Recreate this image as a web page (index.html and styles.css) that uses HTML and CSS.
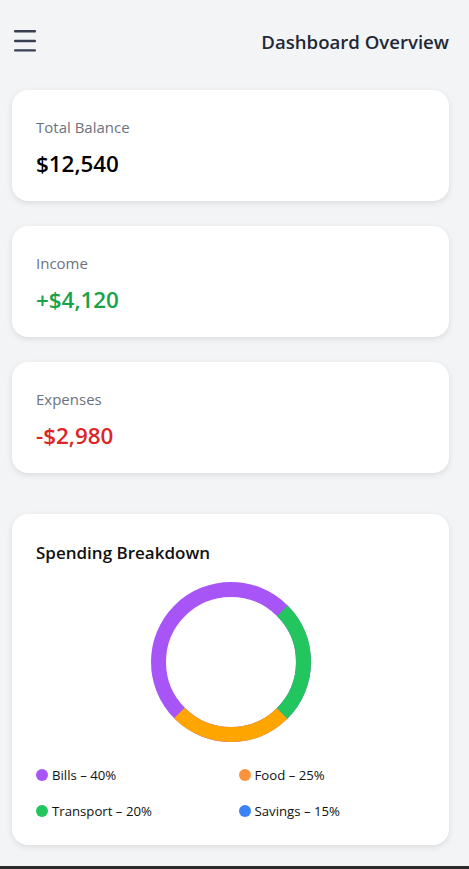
FILE: index.html
```html
<!DOCTYPE html>
<html lang="en">
<head>
    <meta charset="UTF-8">
    <meta name="viewport" content="width=device-width, initial-scale=1.0">
    <title>Dashboard Overview</title>
    <link rel="stylesheet" href="styles.css">
</head>
<body>

<header class="topBar">
    <button class="menuButton" aria-label="Menu">
        <svg width="22" height="22" viewBox="0 0 22 22">
            <rect x="0" y="0" width="22" height="2.4" rx="1" fill="#374151"/>
            <rect x="0" y="9.8" width="22" height="2.4" rx="1" fill="#374151"/>
            <rect x="0" y="19.2" width="22" height="2.4" rx="1" fill="#374151"/>
        </svg>
    </button>
    <h1 class="pageTitle">Dashboard Overview</h1>
</header>

<main class="content">
    <div class="card statCard">
        <div class="statLabel">Total Balance</div>
        <div class="statValue">$12,540</div>
    </div>

    <div class="card statCard">
        <div class="statLabel">Income</div>
        <div class="statValue positive">+$4,120</div>
    </div>

    <div class="card statCard">
        <div class="statLabel">Expenses</div>
        <div class="statValue negative">-$2,980</div>
    </div>

    <div class="card chartCard">
        <h2 class="chartTitle">Spending Breakdown</h2>

        <div class="donutWrap">
            <svg class="donut" width="160" height="160" viewBox="0 0 160 160">
                <!-- segments drawn clockwise from the top -->
                <circle cx="80" cy="80" r="72.5" fill="none" stroke="#a855f7" stroke-width="15"/>
                <circle cx="80" cy="80" r="72.5" fill="none" stroke="#22c55e" stroke-width="15"
                        stroke-dasharray="113.88 341.64" stroke-dashoffset="-56.94" transform="rotate(-90 80 80)"/>
                <circle cx="80" cy="80" r="72.5" fill="none" stroke="#ffa500" stroke-width="15"
                        stroke-dasharray="113.88 341.64" stroke-dashoffset="-170.82" transform="rotate(-90 80 80)"/>
            </svg>
        </div>

        <ul class="legend">
            <li><span class="dot" style="background:#a855f7"></span>Bills – 40%</li>
            <li><span class="dot" style="background:#fb923c"></span>Food – 25%</li>
            <li><span class="dot" style="background:#22c55e"></span>Transport – 20%</li>
            <li><span class="dot" style="background:#3b82f6"></span>Savings – 15%</li>
        </ul>
    </div>
</main>

<nav class="bottomNav"></nav>

</body>
</html>
```

FILE: styles.css
```css
body {
    margin: 0;
    background-color: #f3f4f6;
    font-family: "Open Sans", "Noto Sans", sans-serif;
    color: #111;
}
.topBar {
    display: flex;
    align-items: center;
    justify-content: space-between;
    height: 82px;
    padding: 0 20px 0 14px;
}
.menuButton {
    background: none;
    border: none;
    padding: 0;
    width: 22px;
    height: 22px;
    display: flex;
    cursor: pointer;
}
.pageTitle {
    margin: 0;
    font-size: 18.6px;
    font-weight: 600;
    color: #1f2937;
}
.content {
    display: flex;
    flex-direction: column;
    gap: 25px;
    padding: 8px 20px 0 12px;
}
.card {
    background: white;
    border-radius: 16px;
    box-shadow: 0 2px 6px rgba(0, 0, 0, 0.1);
    padding: 24px;
}
.statCard {
    height: 111px;
    box-sizing: border-box;
    padding-top: 26px;
    display: flex;
    flex-direction: column;
    gap: 9px;
}
.statLabel {
    font-size: 15px;
    line-height: 22px;
    color: #6b7280;
}
.statValue {
    font-size: 22.4px;
    line-height: 33px;
    font-weight: 600;
    color: #000;
}
.positive {
    color: #16a34a;
}
.negative {
    color: #dc2626;
}
.chartCard {
    margin-top: 16px;
}
.chartTitle {
    margin: 0;
    padding-top: 2px;
    font-size: 17px;
    line-height: 26px;
    font-weight: 600;
}
.donutWrap {
    display: flex;
    justify-content: center;
    margin-top: 16px;
}
.donut {
    display: block;
}
.legend {
    list-style: none;
    margin: 23px 0 0;
    padding: 0;
    display: grid;
    grid-template-columns: 1fr 1fr;
    gap: 16px;
}
.legend li {
    display: flex;
    align-items: center;
    gap: 4px;
    font-size: 13.2px;
    line-height: 20px;
}
.dot {
    width: 12px;
    height: 12px;
    border-radius: 50%;
    flex-shrink: 0;
}
.bottomNav {
    margin-top: 21px;
    height: 60px;
    background: #2b2b2b;
}
```
